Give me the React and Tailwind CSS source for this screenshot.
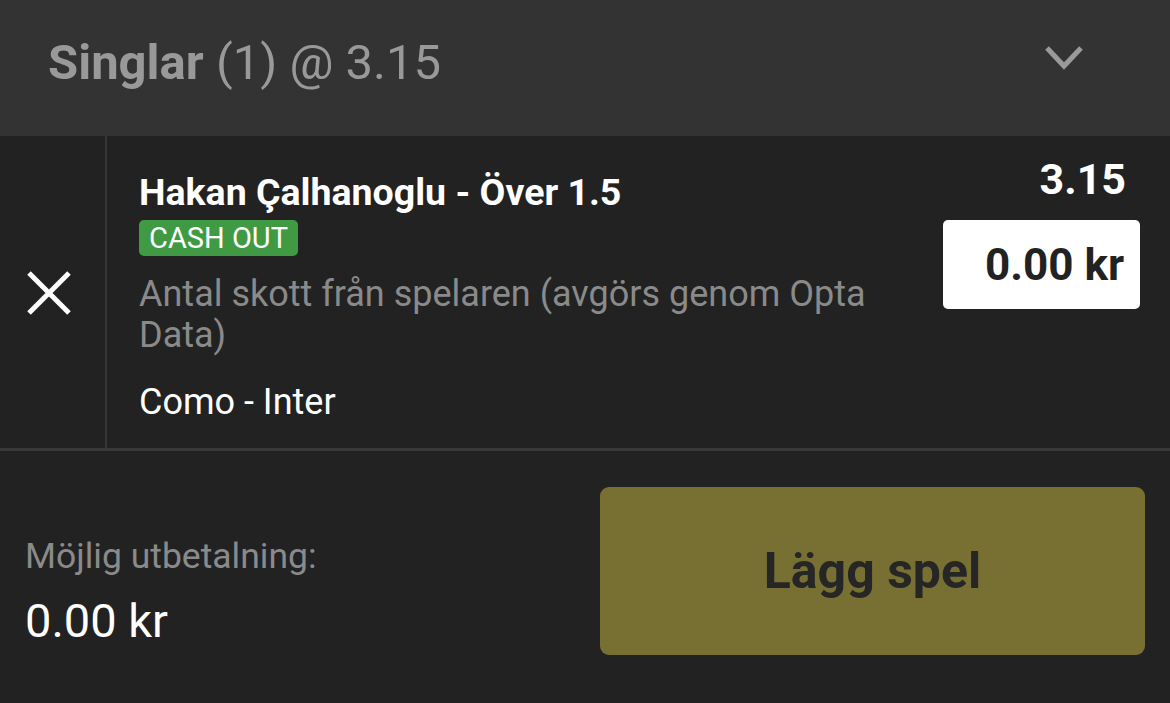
import { useState } from "react";

/**
 * Bet slip — a single selection with stake input and place-bet button.
 */
function Chevron() {
    return (
        <svg width="40" height="28" viewBox="0 0 40 28" fill="none">
            <path d="M3 4 L20 22 L37 4" stroke="#9a9a9a" strokeWidth="5" />
        </svg>
    );
}

function Cross() {
    return (
        <svg width="44" height="44" viewBox="0 0 44 44" fill="none">
            <path d="M2 2 L42 42 M42 2 L2 42" stroke="#ffffff" strokeWidth="5" />
        </svg>
    );
}

export default function App() {
    const [stake] = useState("0.00 kr");

    return (
        <div className="w-[1170px] h-[703px] overflow-hidden bg-[#222222] font-['Roboto',sans-serif]">
            {/* Header */}
            <div className="h-[136px] bg-[#333333] flex items-center justify-between pl-[48px] pr-[86px]">
                <p className="text-[49px] leading-[56px] text-[#999999] mt-[-10px]">
                    <span className="font-bold">Singlar</span> (1) @ 3.15
                </p>
                <div className="mt-[-20px]">
                    <Chevron />
                </div>
            </div>

            {/* Selection row */}
            <div className="flex h-[315px] border-b-[3px] border-[#383838]">
                <div className="w-[107px] shrink-0 border-r-2 border-[#363636] flex items-center justify-center pt-[2px] pr-[8px]">
                    <Cross />
                </div>
                <div className="flex-1 flex justify-between pl-[32px] pr-[30px]">
                    <div className="flex flex-col items-start pt-[35px]">
                        <p className="text-[37.5px] leading-[42px] font-bold text-white">
                            Hakan Çalhanoglu - Över 1.5
                        </p>
                        <span className="mt-[7px] h-[36px] px-[10px] rounded-[5px] bg-[#409a44] text-white text-[29px] leading-[36px]">
                            CASH OUT
                        </span>
                        <p className="mt-[18px] text-[36px] leading-[41px] text-[#8a8a8a] w-[740px]">
                            Antal skott från spelaren (avgörs genom Opta Data)
                        </p>
                        <p className="mt-[26px] text-[36px] leading-[41px] text-white">
                            Como - Inter
                        </p>
                    </div>
                    <div className="flex flex-col items-end pt-[19px]">
                        <p className="text-[43px] leading-[48px] font-bold text-white pr-[14px]">3.15</p>
                        <div className="mt-[17px] w-[197px] h-[89px] bg-white rounded-[5px] flex items-center justify-end pr-[16px]">
                            <span className="text-[44px] font-bold text-[#222222]">{stake}</span>
                        </div>
                    </div>
                </div>
            </div>

            {/* Footer */}
            <div className="flex justify-between pl-[25px] pr-[25px] pt-[36px]">
                <div className="flex flex-col pt-[49px]">
                    <p className="text-[35.5px] leading-[40px] text-[#8a8a8a]">Möjlig utbetalning:</p>
                    <p className="mt-[19px] text-[47px] leading-[52px] text-white">0.00 kr</p>
                </div>
                <button className="w-[545px] h-[168px] rounded-[9px] bg-[#787032] text-[#262626] text-[50px] font-bold">
                    Lägg spel
                </button>
            </div>
        </div>
    );
}
